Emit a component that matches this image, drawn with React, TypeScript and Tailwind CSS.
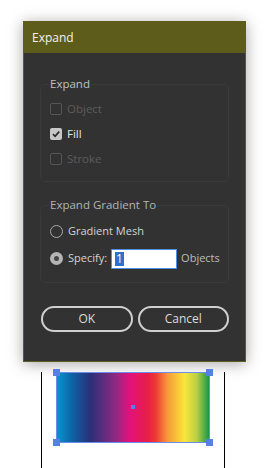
import React from "react";

const font = { fontFamily: '"Open Sans", "Noto Sans", sans-serif' };

function Check({ checked, disabled, label }: { checked?: boolean; disabled?: boolean; label: string }) {
  return (
    <div className="flex items-center h-[25px] gap-[5px]">
      <div
        className={`w-[12px] h-[12px] rounded-[2px] flex items-center justify-center ${
          checked ? "bg-[#c8c8c8]" : disabled ? "border border-[#555555]" : "border border-[#999999]"
        }`}
      >
        {checked && (
          <svg width="10" height="10" viewBox="0 0 10 10">
            <path d="M2 5.2 L4.1 7.3 L8.2 2.6" fill="none" stroke="#2a2a2a" strokeWidth="1.7" />
          </svg>
        )}
      </div>
      <span className={`text-[11.5px] ${disabled ? "text-[#5c5c5c]" : "text-[#e6e6e6]"}`}>{label}</span>
    </div>
  );
}

function Radio({ selected, label }: { selected?: boolean; label: string }) {
  return (
    <div className="flex items-center gap-[5px]">
      <div
        className={`w-[13px] h-[13px] rounded-full flex items-center justify-center ${
          selected ? "bg-[#b5b5b5]" : "border border-[#a8a8a8]"
        }`}
      >
        {selected && <div className="w-[5px] h-[5px] rounded-full bg-[#444444]" />}
      </div>
      <span className="text-[11px] text-[#d4d4d4]">{label}</span>
    </div>
  );
}

export default function App() {
  return (
    <div className="w-[269px] h-[468px] bg-white overflow-hidden" style={font}>
      <div className="pt-[21px] pl-[23px]">
        <div className="w-[223px] h-[341px] bg-[#323232] border border-[#5e5c1c] shadow-[0_2px_14px_rgba(0,0,0,0.35)] flex flex-col">
          <div className="h-[31px] bg-[#5e5c1a] flex items-center pl-[8px] text-[12px] text-[#f2f2f2]">Expand</div>

          <div className="px-[16px] pt-[24px]">
            <fieldset className="border border-[#3a3a3a] rounded-[5px] pl-[9px] h-[105px]">
              <legend className="px-[1px] -ml-[1px] text-[11.5px] text-[#c0c0c0] leading-[14px]">Expand</legend>
              <div className="pt-[5px]">
                <Check disabled label="Object" />
                <Check checked label="Fill" />
                <Check disabled label="Stroke" />
              </div>
            </fieldset>

            <fieldset className="mt-[16px] border border-[#3a3a3a] rounded-[5px] pl-[9px] h-[85px]">
              <legend className="px-[1px] -ml-[1px] text-[11.5px] text-[#b4b4b4] leading-[14px]">Expand Gradient To</legend>
              <div className="pt-[11px] flex flex-col gap-[9px]">
                <Radio label="Gradient Mesh" />
                <div className="flex items-center">
                  <Radio selected label="Specify:" />
                  <div className="ml-[4px] w-[66px] h-[20px] bg-white border border-[#4d8fe0] flex items-center pl-[3px]">
                    <span className="bg-[#2e6fd0] text-white text-[12px] leading-[14px] px-[1px]">1</span>
                  </div>
                  <span className="ml-[4px] text-[11px] text-[#bdbdbd]">Objects</span>
                </div>
              </div>
            </fieldset>

            <div className="mt-[23px] flex gap-[5px] pl-[1px]">
              <button className="w-[92px] h-[26px] rounded-full border-2 border-[#cfcfcf] text-[12px] text-[#dcdcdc]">OK</button>
              <button className="w-[92px] h-[26px] rounded-full border-2 border-[#cfcfcf] text-[12px] text-[#dcdcdc]">Cancel</button>
            </div>
          </div>
        </div>
      </div>

      <div className="ml-[41px] w-[184px] h-[106px] border-x border-black">
        <div className="relative ml-[14px] mt-[10px] w-[154px] h-[71px]">
          <div className="w-full h-full border border-[#6b8de8] bg-[linear-gradient(90deg,#0a93d1_0%,#0d63a4_10%,#2b2f78_22%,#8b2a82_38%,#e3117c_48%,#e81f45_60%,#ef3a35_65%,#f79c3a_73%,#f9e63c_84%,#b9cf45_92%,#169948_100%)]" />
          <div className="absolute -left-[3px] -top-[3px] w-[7px] h-[7px] bg-[#5680e6]" />
          <div className="absolute -right-[3px] -top-[3px] w-[7px] h-[7px] bg-[#5680e6]" />
          <div className="absolute -left-[3px] -bottom-[3px] w-[7px] h-[7px] bg-[#5680e6]" />
          <div className="absolute -right-[3px] -bottom-[3px] w-[7px] h-[7px] bg-[#5680e6]" />
          <div className="absolute left-[75px] top-[33px] w-[4px] h-[4px] bg-[#5680e6]" />
        </div>
      </div>
    </div>
  );
}
